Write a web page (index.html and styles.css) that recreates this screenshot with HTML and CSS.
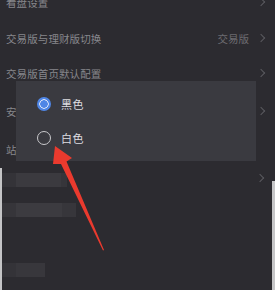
FILE: index.html
```html
<!DOCTYPE html>
<html lang="zh">
<head>
<meta charset="utf-8">
<link rel="stylesheet" href="styles.css">
</head>
<body>
<div class="screen">
  <div class="list">
    <div class="row r1"><span class="label">看盘设置</span><span class="chev"></span></div>
    <div class="row r2"><span class="label">交易版与理财版切换</span><span class="value">交易版</span><span class="chev"></span></div>
    <div class="row r3"><span class="label">交易版首页默认配置</span><span class="chev"></span></div>
    <div class="row r4"><span class="label">安全设置</span><span class="chev"></span></div>
    <div class="row r5"><span class="label">站内消息</span></div>
  </div>
  <div class="panel">
    <span class="chev peek"></span>
    <div class="blur b1"><span class="s1"></span><span class="s2"></span><span class="s3"></span></div>
    <div class="blur b2"><span class="s1"></span><span class="s2"></span><span class="s3"></span></div>
    <div class="blur b3"><span class="s1"></span><span class="s2"></span></div>
  </div>

  <div class="dialog">
    <div class="opt"><span class="radio on"></span><span class="otext">黑色</span></div>
    <div class="opt"><span class="radio"></span><span class="otext">白色</span></div>
  </div>

  <svg class="arrow" width="275" height="290" viewBox="0 0 275 290">
    <path d="M55 146 L72 158 L66.5 161.5 L104 250 L103 250.5 L61 164 L53 164 Z" fill="#ea3a2e"/>
  </svg>
</div>
</body>
</html>
```
FILE: styles.css
```css
html, body {
  margin: 0;
  padding: 0;
  background: #2c2b30;
}
body {
  font-family: "Noto Sans CJK SC", "Noto Sans", sans-serif;
  width: 275px;
  height: 290px;
  overflow: hidden;
}
.screen {
  position: relative;
  width: 275px;
  height: 290px;
  overflow: hidden;
  background: #2c2b30;
}
.list {
  margin-top: -17px;
}
.row {
  display: flex;
  align-items: center;
  padding: 0 10px 0 6px;
  font-size: 10.5px;
  color: #87878c;
}
.r1 { height: 38px; }
.r2 { height: 34px; }
.r3 { height: 36px; }
.r4 { height: 40px; }
.r5 { height: 37px; }
.label {
  flex: 1;
  letter-spacing: 0.1px;
}
.value {
  color: #6c6c70;
  margin-right: 9px;
}
.chev {
  width: 5px;
  height: 5px;
  border-top: 1.2px solid #5a5a5f;
  border-right: 1.2px solid #5a5a5f;
  transform: rotate(45deg);
  margin-right: 1px;
}
.panel {
  position: relative;
  height: 122px;
  border-left: 2px solid #c4c4c6;
  background: #2c2b30;
  padding-top: 5px;
  box-sizing: border-box;
}
.panel::after {
  content: "";
  position: absolute;
  right: 0;
  top: 13px;
  bottom: 0;
  width: 3px;
  background: #c6c6c8;
}
.chev.peek {
  position: absolute;
  right: 11px;
  top: 7px;
}
.blur {
  display: flex;
  height: 14px;
}
.blur span { height: 14px; }
.b1 { margin-bottom: 16px; }
.b1 .s1 { width: 14px; background: #343338; }
.b1 .s2 { width: 45px; background: #3b3a3f; }
.b1 .s3 { width: 6px; background: #36353a; }
.b2 { margin-bottom: 46px; }
.b2 .s1 { width: 14px; background: #36353a; }
.b2 .s2 { width: 46px; background: #3c3b40; }
.b2 .s3 { width: 14px; background: #37363b; }
.b3 .s1 { width: 14px; background: #343338; }
.b3 .s2 { width: 29px; background: #38373c; }

.dialog {
  position: absolute;
  left: 16px;
  top: 81px;
  width: 240px;
  height: 80px;
  background: #3a3a40;
  box-sizing: border-box;
  padding: 16px 0 0 21px;
  display: flex;
  flex-direction: column;
  gap: 20px;
}
.opt {
  display: flex;
  align-items: center;
  height: 14px;
}
.radio {
  width: 14px;
  height: 14px;
  box-sizing: border-box;
  border-radius: 50%;
  border: 1.5px solid #c9c9cc;
  margin-right: 10px;
}
.radio.on {
  border: 2px solid #4f86e6;
  background: radial-gradient(circle, #4f86e6 0 3.5px, #d9e3f6 4px 4.6px, #4f86e6 5px);
}
.otext {
  font-size: 11px;
  color: #dedee0;
  letter-spacing: 0.5px;
}
.arrow {
  position: absolute;
  left: 0;
  top: 0;
}
```
